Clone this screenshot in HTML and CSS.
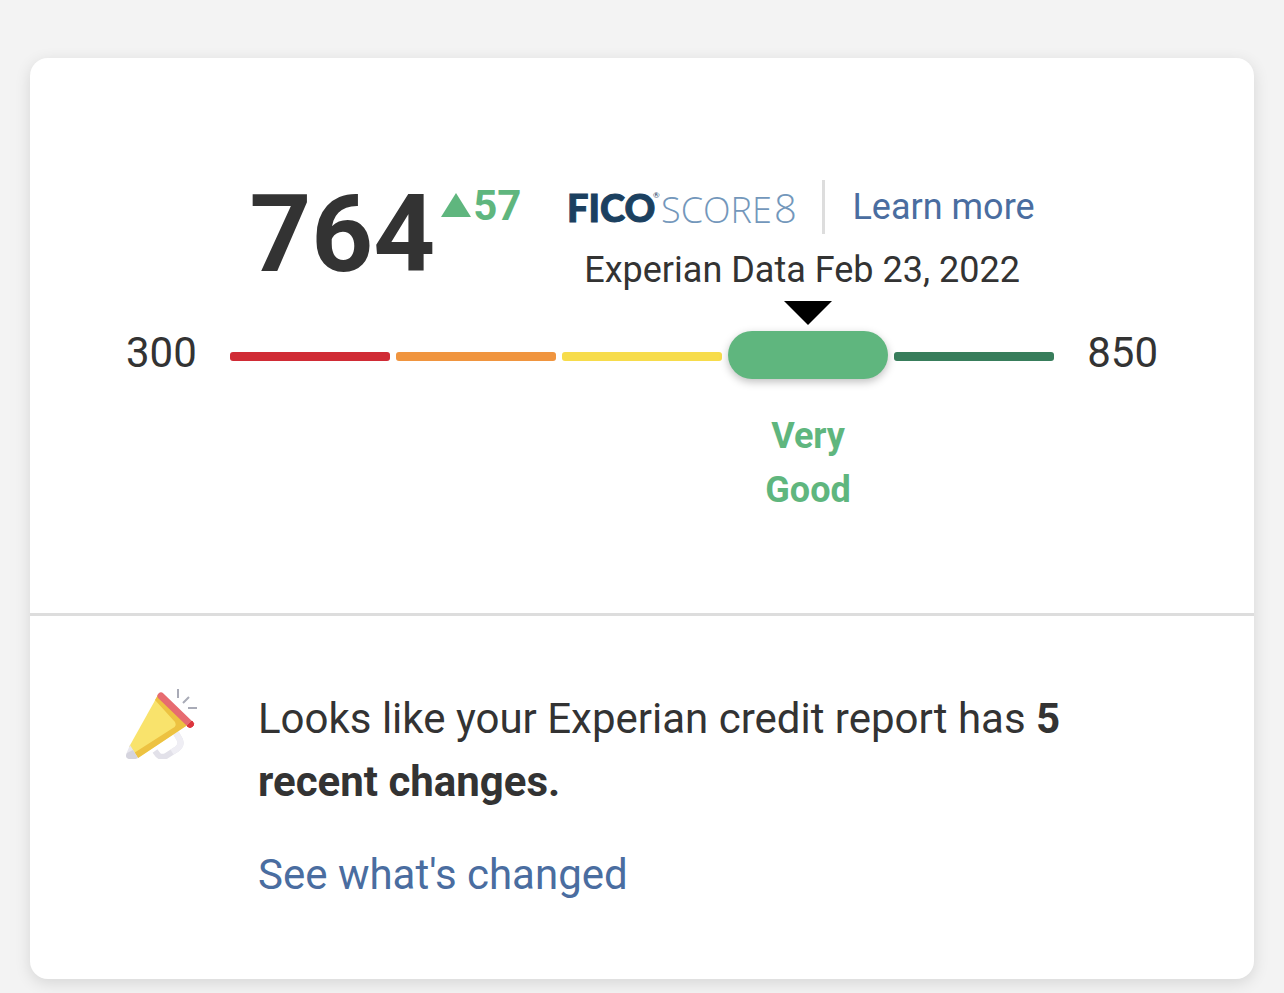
FILE: index.html
```html
<!DOCTYPE html>
<html lang="en">
<head>
  <meta charset="UTF-8">
  <meta name="viewport" content="width=device-width, initial-scale=1">
  <title>FICO Score</title>
  <link rel="stylesheet" href="styles.css">
</head>
<body>

<main class="card">
  <section class="score">
    <div class="score-header">
      <div class="score-value">
        <span class="number">764</span>
        <svg class="arrow" viewBox="0 0 30 24" aria-hidden="true"><path d="M15 0L30 24H0z"/></svg>
        <span class="change">57</span>
      </div>
      <div class="score-info">
        <div class="score-source">
          <svg class="logo" viewBox="0 0 226 54" role="img" aria-label="FICO Score 8">
            <text class="logo-fico" x="-2" y="42">FICO</text>
            <text class="logo-reg" x="84" y="18">®</text>
            <text class="logo-score" x="92" y="43">SCORE</text>
            <text class="logo-eight" x="205" y="43">8</text>
          </svg>
          <a class="learn-more" href="#">Learn more</a>
        </div>
        <div class="score-date">Experian Data Feb 23, 2022</div>
      </div>
    </div>

    <div class="scale">
      <span class="limit">300</span>
      <div class="bars">
        <div class="bar poor"></div>
        <div class="bar fair"></div>
        <div class="bar good"></div>
        <div class="bar very-good active"></div>
        <div class="bar exceptional"></div>
        <div class="rating">Very Good</div>
      </div>
      <span class="limit">850</span>
    </div>
  </section>

  <section class="changes">
    <svg class="megaphone" viewBox="0 0 72 72" aria-hidden="true">
      <path d="M29 64l3 4q3 3 8 1l11-7q5-4 3-9l-4-7" fill="none" stroke="#e2e1e9" stroke-width="6" stroke-linejoin="round"/>
      <path d="M50 46l4 7q2 5-3 9l-5 3" fill="none" stroke="#efeef4" stroke-width="6"/>
      <path d="M32 8L3 60l9 11L63 37z" fill="#f9e36c"/>
      <path d="M32 8l-3 5 20 22q2 4-2 6L8 66l4 5L63 37z" fill="#edc241"/>
      <path d="M4 58l8 13q-7 3-11 0-2-2 0-6z" fill="#e8e7ee"/>
      <path d="M1 66l6-3 5 8q-7 3-11 0-2-2 0-5z" fill="#d5d4de"/>
      <path d="M35 9l29 28" stroke="#e76b70" stroke-width="7" stroke-linecap="round"/>
      <path d="M61 39l5-5q3 3 1 5-3 3-6 0z" fill="#dc353d" stroke="#dc353d" stroke-linejoin="round"/>
      <path d="M52 2v9M57 16l6-6M62 21h9" stroke="#a9abb7" stroke-width="2"/>
    </svg>
    <div class="changes-text">
      <p>Looks like your Experian credit report has <b>5 recent changes.</b></p>
      <a href="#">See what's changed</a>
    </div>
  </section>
</main>

</body>
</html>
```
FILE: styles.css
```css
* {
  box-sizing: border-box;
}
body {
  margin: 0;
  padding: 58px 30px 14px;
  background: #f3f3f3;
  color: #333;
  font-family: Roboto, "Liberation Sans", sans-serif;
  font-size: 42px;
}
a {
  color: #4a6da0;
  text-decoration: none;
}
.card {
  background: #fff;
  border-radius: 18px;
  box-shadow: 0 4px 16px rgba(0, 0, 0, 0.12);
}
.score {
  padding: 122px 96px 96px;
  border-bottom: 3px solid #ddd;
}
.score-header {
  display: flex;
  justify-content: center;
  gap: 48px;
}
.score-value {
  display: flex;
  align-items: flex-start;
}
.number {
  font-size: 108px;
  line-height: 108px;
  font-weight: bold;
}
.arrow {
  width: 30px;
  height: 24px;
  margin: 13px 2px 0 6px;
  fill: #5fb67e;
}
.change {
  color: #5fb67e;
  line-height: 51px;
  font-weight: bold;
}
.score-info {
  font-size: 36px;
  line-height: 54px;
  text-align: center;
}
.score-source {
  display: flex;
  justify-content: center;
  gap: 27px;
  margin-bottom: 9px;
}
.logo {
  width: 226px;
  height: 54px;
  overflow: visible;
}
.logo-fico {
  font-family: Lato, sans-serif;
  font-size: 38px;
  font-weight: 900;
  fill: #1b4060;
  stroke: #1b4060;
  stroke-width: 1px;
}
.logo-reg {
  font-family: Lato, sans-serif;
  font-size: 8px;
  fill: #1b4060;
}
.logo-score,
.logo-eight {
  font-family: "Open Sans", sans-serif;
  font-size: 36px;
  font-weight: 300;
  fill: #7397bb;
}
.logo-eight {
  font-size: 40px;
}
.learn-more {
  padding-left: 27px;
  border-left: 3px solid #ddd;
}
.scale {
  display: flex;
  align-items: flex-start;
  gap: 33px;
  margin-top: 34px;
}
.limit {
  line-height: 43px;
}
.bars {
  flex: 1;
  display: grid;
  grid-template-columns: repeat(5, 1fr);
  grid-template-rows: 48px auto;
  align-items: center;
  column-gap: 6px;
}
.bar {
  height: 9px;
  margin-top: 2px;
  border-radius: 3px;
}
.poor {
  background: #d02b35;
}
.fair {
  background: #f0953f;
}
.good {
  background: #f7dc4b;
}
.very-good {
  background: #5fb67e;
}
.exceptional {
  background: #387d5b;
}
.active {
  position: relative;
  height: 48px;
  margin-top: 0;
  border-radius: 24px;
  box-shadow: 0 3px 9px rgba(0, 0, 0, 0.25);
}
.active::before {
  content: "";
  position: absolute;
  top: -30px;
  left: calc(50% - 24px);
  border: 24px solid transparent;
  border-top-color: #000;
  border-bottom: 0;
}
.rating {
  grid-column: 4;
  margin-top: 30px;
  color: #5fb67e;
  font-size: 36px;
  line-height: 54px;
  font-weight: bold;
  text-align: center;
}
.changes {
  display: flex;
  align-items: flex-start;
  gap: 60px;
  padding: 71px 96px 73px;
  line-height: 63px;
}
.megaphone {
  flex: none;
  width: 72px;
  height: 72px;
}
.changes-text p {
  margin: 0 0 30px;
}
```
